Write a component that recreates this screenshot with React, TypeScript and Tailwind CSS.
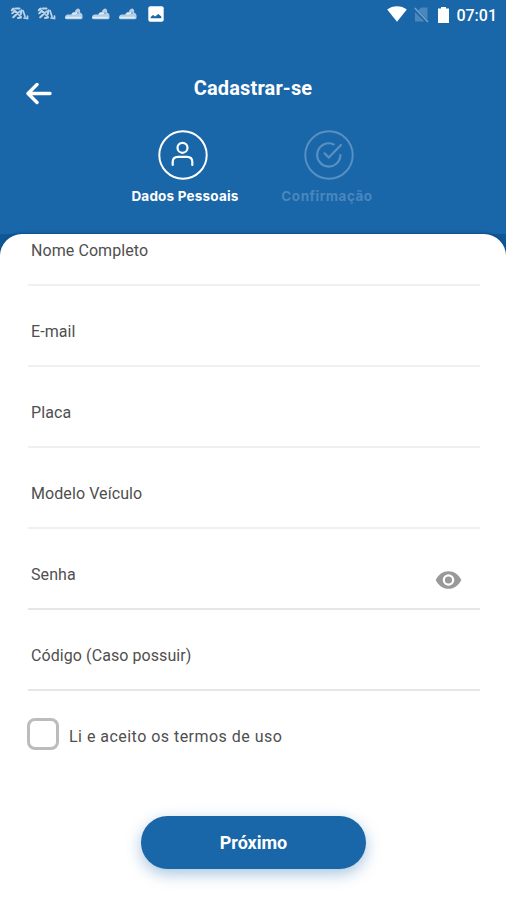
import type { ReactNode } from "react";

type Campo = {
  rotulo: string;
  // altura da linha e cor da borda
  linha: string;
  senha?: boolean;
};

const campos: Campo[] = [
  { rotulo: "Nome Completo", linha: "h-[52px] border-[#f0f0f0]" },
  { rotulo: "E-mail", linha: "h-[81px] border-[#f0f0f0]" },
  { rotulo: "Placa", linha: "h-[81px] border-[#f0f0f0]" },
  { rotulo: "Modelo Veículo", linha: "h-[81px] border-[#f0f0f0]" },
  { rotulo: "Senha", linha: "h-[81px] border-[#e6e6e6]", senha: true },
  { rotulo: "Código (Caso possuir)", linha: "h-[81px] border-[#e6e6e6]" },
];

function IconeSatelite() {
  return (
    <svg width="20" height="14" viewBox="0 0 20 14" fill="none" stroke="#bdd4e9" strokeLinecap="round">
      <path d="M1.8 3.2 3.5 1.6M5.5 1.6h4M2.2 6.3l2.5-2 2 1M3.2 10.3l2.3-2M8 11l3-.6M11.5 3.2l-.8 4.3" strokeWidth="2" />
      <path d="m5.5 8 4.5-3.8M13 3.5l2 6M14 11l3.5.6V9M3 2l8 8" strokeWidth="1.7" />
    </svg>
  );
}

function IconeNuvem() {
  return (
    <svg width="20" height="14" viewBox="0 0 20 14">
      <path
        d="M1 11.2C.8 8.7 2 7.4 4 7.4h3.2c.8-1.8 2-2.4 3.6-2.4.6-2 1.7-3.2 3.7-3.4 1.6.8 2 2.2 1.5 3.9 2.4.6 3 2.9 2.4 5.9-.2.5-1 .8-1.8.8H2.5c-.8 0-1.4-.4-1.5-1.1Z"
        fill="#b3cde5"
      />
      <path d="M2 10.5h14.5M9 7l3.5-.8" stroke="#e0ecf6" strokeWidth="1.5" strokeLinecap="round" />
      <circle cx="14" cy="6" r="1" fill="#7fa9d0" />
    </svg>
  );
}

function BarraStatus() {
  return (
    <div className="flex h-[30px] items-start justify-between pl-[10px] pr-[9px] pt-[7px]">
      <div className="flex gap-[7px]">
        <IconeSatelite />
        <IconeSatelite />
        <IconeNuvem />
        <IconeNuvem />
        <IconeNuvem />
        <svg className="ml-[3px] -mt-px" width="16" height="16" viewBox="0 0 16 16">
          <rect x=".3" y=".3" width="15.4" height="15.4" rx="2" fill="#fff" />
          <path d="M2.7 12.3V11L5 9l2.2 1.6L10.3 8l3 2.5v1.8Z" fill="#1966a8" />
        </svg>
      </div>
      <div className="flex">
        <svg className="-mt-px" width="20" height="16" viewBox="0 0 20 16">
          <path d="M.2 3.6C5.5-.9 14.5-.9 19.8 3.6L10 15.7Z" fill="#fff" />
        </svg>
        <svg className="ml-[7px]" width="15" height="16" viewBox="0 0 15 16">
          <path d="M13.5.5v12L4.2 3.2 7 .5ZM1 5l9.5 9.5H1Z" fill="#4b86bc" />
          <path d="m.8 1 13.2 14" stroke="#75a2cb" strokeWidth="1.5" />
        </svg>
        <svg className="ml-[9px]" width="11" height="16" viewBox="0 0 11 16">
          <path d="M3 0h5v1.5h3V16H0V1.5h3Z" fill="#fff" />
        </svg>
        <span className="ml-[7px] text-[16px] font-medium leading-[17px]">07:01</span>
      </div>
    </div>
  );
}

type EtapaProps = { rotulo: string; cor: string; texto: string; children: ReactNode };

function Etapa({ rotulo, cor, texto, children }: EtapaProps) {
  return (
    <div className={`flex w-[146px] flex-col items-center ${cor}`}>
      <svg width="50" height="50" viewBox="0 0 50 50" fill="none" stroke="currentColor" strokeWidth="2.2" strokeLinecap="round" strokeLinejoin="round">
        <circle cx="25" cy="25" r="23.7" strokeWidth="2" />
        {children}
      </svg>
      <span className={`mt-[7px] whitespace-nowrap font-['Inter',sans-serif] text-[13.5px] font-bold leading-[18px] ${texto}`}>
        {rotulo}
      </span>
    </div>
  );
}

export default function App() {
  return (
    <div className="h-[900px] w-full overflow-hidden bg-[#0f5796] font-['Roboto',sans-serif]">
      <header className="h-[234px] bg-[#1966a8] text-white">
        <BarraStatus />

        <div className="grid h-[100px] grid-cols-[60px_1fr_60px] items-start pt-[45px]">
          <button aria-label="Voltar" className="ml-[26px] mt-[7px] w-[26px]">
            <svg width="26" height="24" viewBox="0 0 26 24" fill="none" stroke="#fff" strokeWidth="3.4" strokeLinecap="round" strokeLinejoin="round">
              <path d="M24 11.5H2.5M11 2.5 2 11.5l9 9" />
            </svg>
          </button>
          <h1 className="text-center text-[20px] font-bold leading-[26px] tracking-[0.15px]">Cadastrar-se</h1>
        </div>

        <div className="flex pl-[110px]">
          <Etapa rotulo="Dados Pessoais" cor="text-white" texto="pl-[4px] tracking-[0.2px]">
            <circle cx="24.5" cy="17.8" r="5" />
            <path d="M14.7 35v-3.2c0-3.2 2.3-5 5.3-5h9c3 0 5.3 1.8 5.3 5V35" />
          </Etapa>
          <Etapa rotulo="Confirmação" cor="text-[#5990c4]" texto="pr-[4px] tracking-[0.5px] text-[#4a87bf]">
            <path d="M29.7 14.4A11.6 11.6 0 1 0 36.4 25" />
            <path d="m20.5 23.3 4.3 4.3L37 15" />
          </Etapa>
        </div>
      </header>

      <main className="flex h-[666px] flex-col rounded-t-[22px] bg-white pl-[28px] pr-[26px] text-[16px] text-[#4f4f4f] shadow-[0_-1px_3px_#0b4b8a]">
        {campos.map((c) => (
          <div key={c.rotulo} className={`flex shrink-0 items-end justify-between border-b-2 pb-[23px] pl-[3px] pr-[18px] ${c.linha}`}>
            <span className="leading-[20px] tracking-[0.08px]">{c.rotulo}</span>
            {c.senha && (
              <svg className="-mb-[5px]" width="27" height="20" viewBox="0 0 27 20">
                <path d="M.7 10C3.5 4.2 8 1.2 13.5 1.2S23.5 4.2 26.3 10c-2.8 5.8-7.3 8.8-12.8 8.8S3.5 15.8.7 10Z" fill="#999" />
                <circle cx="13.5" cy="10" r="4.7" fill="#999" stroke="#fff" strokeWidth="2.2" />
              </svg>
            )}
          </div>
        ))}

        <label className="-ml-px mt-[27px] flex items-center">
          <span className="size-[32px] rounded-[8px] border-[3px] border-[#bcbcbc]" />
          <span className="ml-[10px] mt-[5px] leading-[20px] tracking-[0.47px]">Li e aceito os termos de uso</span>
        </label>

        <button className="ml-[113px] mt-[66px] h-[53px] w-[225px] shrink-0 rounded-full bg-[#1966a8] text-[18px] font-bold text-white shadow-[0_5px_15px_rgba(25,102,168,0.38)]">
          Próximo
        </button>
      </main>
    </div>
  );
}
